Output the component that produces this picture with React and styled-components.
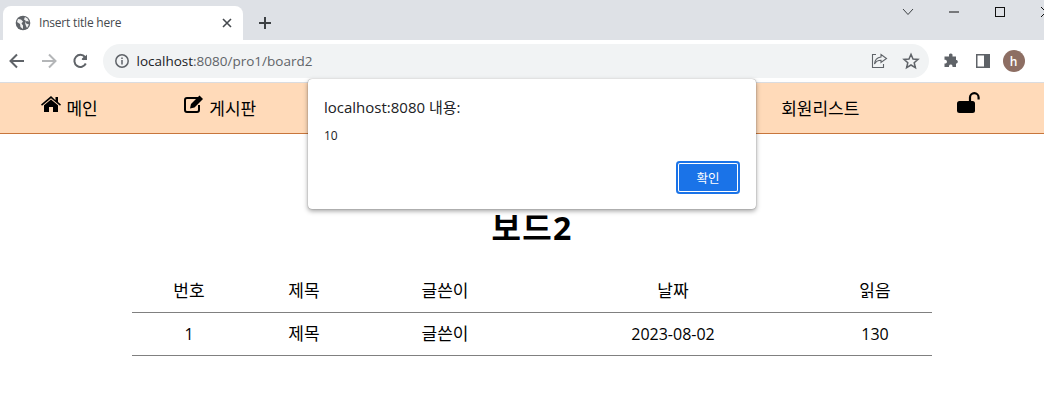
import React from "react";
import styled, { createGlobalStyle } from "styled-components";

const Global = createGlobalStyle`
  html, body { margin: 0; padding: 0; background: #fff; overflow: hidden; }
  body { font-family: "Open Sans", "Noto Sans CJK KR", sans-serif; color: #000; }
  #root { width: 1044px; height: 403px; position: relative; overflow: hidden; }
`;

const KR = `"Open Sans", "Noto Sans CJK KR", sans-serif`;

const TabStrip = styled.div`
  height: 40px; background: #dee1e6; display: flex; align-items: flex-end;
  padding-left: 3px; box-sizing: border-box;
`;
const Tab = styled.div`
  width: 240px; height: 34px; background: #fff; border-radius: 8px 8px 0 0;
  display: flex; align-items: center; padding: 0 8px 0 12px; box-sizing: border-box; gap: 8px;
`;
const TabTitle = styled.span`
  flex: 1; font-size: 12px; color: #45494e; white-space: nowrap; letter-spacing: -0.2px; margin-top: -1px;
`;
const NewTab = styled.div`
  width: 20px; height: 20px; margin: 0 0 7px 12px; display: flex;
`;
const WindowControls = styled.div`
  margin-left: auto; margin-right: -25px; height: 24px; align-self: flex-start; display: flex; align-items: center; flex: none;
`;
const Ctl = styled.div`
  width: ${p => p.$w}px; display: flex; justify-content: center; align-items: center;
`;
const Toolbar = styled.div`
  height: 42px; background: #fff; display: flex; align-items: center; box-sizing: border-box;
  padding-left: 7px;
`;
const NavBtn = styled.div`
  width: 20px; height: 20px; margin-right: 12px; display: flex;
`;
const Omnibox = styled.div`
  width: 826px; height: 34px; border-radius: 17px; background: #f1f3f4; margin-left: -0.5px;
  display: flex; align-items: center; padding: 0 9px 0 11px; box-sizing: border-box;
`;
const Url = styled.span`
  flex: 1; font-size: 13.5px; margin-left: 7px; color: #5f6368; white-space: nowrap;
  b { font-weight: 400; color: #202124; }
`;
const OmniIcon = styled.div`
  width: 18px; height: 18px; margin-left: 14px; display: flex;
`;
const ExtArea = styled.div`
  display: flex; align-items: center; margin-left: 14px; gap: 17px;
`;
const Avatar = styled.div`
  width: 22px; height: 22px; border-radius: 50%; background: #8d6e63; color: #fff; font-size: 12px;
  display: flex; align-items: center; justify-content: center; margin-left: -4px;
  font-family: "Open Sans", sans-serif; font-weight: 600;
`;
const Sep = styled.div`height: 1px; background: #dadce0;`;

const Nav = styled.nav`
  height: 50px; background: #ffdab9; border-bottom: 1px solid #c8763c;
  display: grid; grid-template-columns: repeat(7, 1fr); align-items: center;
`;
const NavItem = styled.div`
  display: flex; align-items: center; justify-content: center; font-size: 17px; gap: 5px;
  font-family: ${KR}; padding-right: ${p => p.$pr || 0}px; white-space: nowrap; color: #000;
  margin-top: -2px;
`;
const NavIcon = styled.span`
  display: flex; margin-bottom: ${p => p.$lift}px;
`;

const Main = styled.main`
  padding-left: 20px; display: flex; flex-direction: column; align-items: center;
`;
const Title = styled.h1`
  font-size: 32px; font-weight: 700; margin: 72px 0 0; line-height: 44px; font-family: ${KR};
  letter-spacing: 1.2px;
`;
const Table = styled.div`
  width: 800px; margin-top: 20px; font-family: ${KR}; font-size: 16px;
`;
const Row = styled.div`
  display: grid; grid-template-columns: 114px 116px 166px 290px 114px; height: 43px; box-sizing: border-box;
  align-items: center; text-align: center; border-bottom: 1px solid #808080;
`;
const Cell = styled.div`
  line-height: 20px;
  font-size: ${p => (p.$kr ? 17 : 16)}px;
`;

const Dialog = styled.div`
  position: absolute; left: 308px; top: 79px; width: 448px; height: 130px; background: #fff;
  border-radius: 4px; box-shadow: 0 0 1px rgba(0,0,0,.55), 0 2px 5px rgba(0,0,0,.38);
  padding: 17px 16px 0; box-sizing: border-box; font-family: ${KR};
`;
const DialogTitle = styled.div`font-size: 15px; line-height: 22px; color: #202124;`;
const DialogMsg = styled.div`font-size: 12px; line-height: 16px; margin-top: 10px; color: #202124;`;
const DialogActions = styled.div`display: flex; justify-content: flex-end; margin-top: 17px;`;
const OkBtn = styled.button`
  width: 64px; height: 33px; background: #1a73e8; color: #fff; border: 0; border-radius: 4px;
  font-size: 12.5px; font-family: ${KR}; padding: 0;
  box-shadow: inset 0 0 0 2px #1a73e8, inset 0 0 0 3px #fff;
`;

const G = "#5f6368";

const Globe = () => (
  <svg width="16" height="16" viewBox="0 0 16 16">
    <circle cx="8" cy="8" r="7.300" fill={G} />
    <path d="M3 4l3 .5 2 2-1.500 2 1.500 2v3.500L5.500 12 5 9 2 7zM10 2l2.500 1.500 1.500 3-2.500-.5-1 2 2 1 1.500.5-2 3.500-1-2-1-3 1-2-2-1.500.5-1.500z" fill="#fff" opacity=".9" />
  </svg>
);
const Close = () => (
  <svg width="16" height="16" viewBox="0 0 16 16">
    <path d="M4 4l8 8M12 4l-8 8" stroke="#45494e" strokeWidth="1.600" />
  </svg>
);
const Plus = () => (
  <svg width="20" height="20" viewBox="0 0 20 20">
    <path d="M10 4v12M4 10h12" stroke="#3c4043" strokeWidth="2" />
  </svg>
);
const Back = ({ c = G, flip }) => (
  <svg width="20" height="20" viewBox="0 0 20 20" style={flip ? { transform: "scaleX(-1)" } : undefined}>
    <path d="M17 10H4M10 3.500L3.500 10l6.500 6.500" fill="none" stroke={c} strokeWidth="2" />
  </svg>
);
const Reload = () => (
  <svg width="20" height="20" viewBox="0 0 20 20">
    <path d="M15.300 12.500A6 6 0 1 1 14.500 6L12 8.500" fill="none" stroke={G} strokeWidth="2" transform="translate(-.5 0)" />
    <path d="M16 3.500V9h-5.500z" fill={G} />
  </svg>
);
const Info = () => (
  <svg width="16" height="16" viewBox="0 0 16 16">
    <circle cx="8" cy="8" r="6.200" fill="none" stroke={G} strokeWidth="1.500" />
    <path d="M8 7v4.500M8 4.500V6" stroke={G} strokeWidth="1.500" />
  </svg>
);
const Share = () => (
  <svg width="18" height="18" viewBox="0 0 18 18">
    <path d="M6 2.500H2.500v13h11V12" fill="none" stroke={G} strokeWidth="1.100" />
    <path d="M11 2.500l5.500 4-5.500 4V8.300c-3 0-5 1-6.500 3.700.3-4 2.800-6.500 6.500-7z" fill="none" stroke={G} strokeWidth="1.100" />
  </svg>
);
const Star = () => (
  <svg width="18" height="18" viewBox="0 0 18 18">
    <path d="M9 2.300l2 4.700 5 .4-3.800 3.300 1.200 5L9 13l-4.400 2.700 1.200-5L2 7.400 7 7z" fill="none" stroke={G} strokeWidth="1.500" />
  </svg>
);
const Puzzle = () => (
  <svg width="16" height="16" viewBox="0 0 16 16">
    <path d="M6 1.500a2 2 0 0 1 3.500 0V3.500h3.500v3.500h.7a2 2 0 0 1 0 3.600H13V14H9.500v-1a1.800 1.800 0 0 0-3.500 0v1H1.500v-3.500h1a1.900 1.900 0 0 0 0-3.700h-1V3.500H6z" fill={G} />
  </svg>
);
const SidePanel = () => (
  <svg width="14" height="14" viewBox="0 0 14 14">
    <rect width="14" height="14" fill={G} />
    <rect x="1.500" y="1.500" width="6.500" height="11" fill="#fff" />
  </svg>
);
const Chevron = () => (
  <svg width="12" height="8" viewBox="0 0 12 8"><path d="M1 1l5 5.500L11 1" fill="none" stroke="#3c4043" /></svg>
);
const Min = () => (
  <svg width="10" height="10" viewBox="0 0 10 10"><path d="M0 5h10" stroke="#111" /></svg>
);
const Max = () => (
  <svg width="10" height="10" viewBox="0 0 10 10"><rect x=".5" y=".5" width="9" height="9" fill="none" stroke="#111" /></svg>
);
const X = () => (
  <svg width="10" height="10" viewBox="0 0 10 10"><path d="M0 0l10 10M10 0L0 10" stroke="#111" /></svg>
);
const Home = () => (
  <svg width="20" height="16" viewBox="0 0 20 16">
    <path d="M10 0L0 8.500l1 1.300L10 2.300l9 7.500 1-1.300-3-2.500V1h-2.500v3.200z" />
    <path d="M10 3.500l-7 5.800V16h5v-5h4v5h5V9.300z" />
  </svg>
);
const Edit = () => (
  <svg width="20" height="18" viewBox="0 0 20 18">
    <path d="M14 3H3a2 2 0 0 0-2 2v10a2 2 0 0 0 2 2h10a2 2 0 0 0 2-2V10" fill="none" stroke="#000" strokeWidth="2" />
    <path d="M7 9l8.500-8.500 3.500 3.500L10.500 12.500 6 13.500z" />
  </svg>
);
const Unlock = () => (
  <svg width="24" height="22" viewBox="0 0 24 22">
    <rect y="9" width="18" height="12" rx="2.500" />
    <path d="M13 10V5.500a4.300 4.300 0 0 1 8.600 0V7.500" fill="none" stroke="#000" strokeWidth="2.200" />
  </svg>
);

export default function App() {
  return (
    <>
      <Global />
      <TabStrip>
        <Tab>
          <Globe />
          <TabTitle>Insert title here</TabTitle>
          <Close />
        </Tab>
        <NewTab><Plus /></NewTab>
        <WindowControls>
          <Ctl $w={46}><Chevron /></Ctl>
          <Ctl $w={46}><Min /></Ctl>
          <Ctl $w={46}><Max /></Ctl>
          <Ctl $w={46}><X /></Ctl>
        </WindowControls>
      </TabStrip>
      <Toolbar>
        <NavBtn><Back /></NavBtn>
        <NavBtn><Back c="#b4b6b8" flip /></NavBtn>
        <NavBtn><Reload /></NavBtn>
        <Omnibox>
          <Info />
          <Url><b>localhost</b>:8080/pro1/board2</Url>
          <OmniIcon><Share /></OmniIcon>
          <OmniIcon><Star /></OmniIcon>
        </Omnibox>
        <ExtArea>
          <Puzzle />
          <SidePanel />
          <Avatar>h</Avatar>
        </ExtArea>
      </Toolbar>
      <Sep />
      <Nav>
        <NavItem $pr={10}><NavIcon $lift={6}><Home /></NavIcon>메인</NavItem>
        <NavItem $pr={7}><NavIcon $lift={6}><Edit /></NavIcon>게시판</NavItem>
        <NavItem />
        <NavItem />
        <NavItem />
        <NavItem>회원리스트</NavItem>
        <NavItem><NavIcon $lift={8}><Unlock /></NavIcon></NavItem>
      </Nav>
      <Main>
        <Title>보드2</Title>
        <Table>
          <Row>
            <Cell $kr>번호</Cell><Cell $kr>제목</Cell><Cell $kr>글쓴이</Cell><Cell $kr>날짜</Cell><Cell $kr>읽음</Cell>
          </Row>
          <Row>
            <Cell>1</Cell><Cell $kr>제목</Cell><Cell $kr>글쓴이</Cell><Cell>2023-08-02</Cell><Cell>130</Cell>
          </Row>
        </Table>
      </Main>
      <Dialog>
        <DialogTitle>localhost:8080 내용:</DialogTitle>
        <DialogMsg>10</DialogMsg>
        <DialogActions><OkBtn>확인</OkBtn></DialogActions>
      </Dialog>
    </>
  );
}
